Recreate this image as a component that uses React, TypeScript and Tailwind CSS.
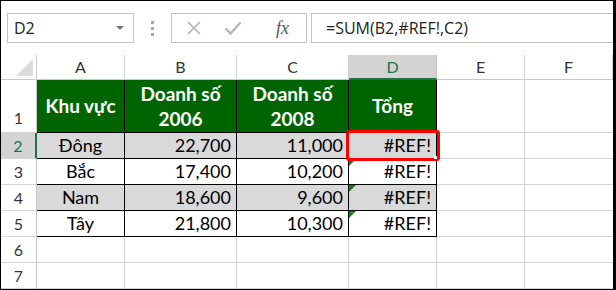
import React from 'react';

const cols = ['A', 'B', 'C', 'D', 'E', 'F'];

interface Row {
  area: string;
  y2006: string;
  y2008: string;
  shaded: boolean;
}

const rows: Row[] = [
  { area: 'Đông', y2006: '22,700', y2008: '11,000', shaded: true },
  { area: 'Bắc', y2006: '17,400', y2008: '10,200', shaded: false },
  { area: 'Nam', y2006: '18,600', y2008: '9,600', shaded: true },
  { area: 'Tây', y2006: '21,800', y2008: '10,300', shaded: false },
];

const cellFont = { fontFamily: 'Lato, "Open Sans", sans-serif' };
const uiFont = { fontFamily: '"Open Sans", "Noto Sans", sans-serif' };

function ErrorFlag() {
  return (
    <span className="absolute left-0 top-0 w-0 h-0 border-t-[7px] border-r-[7px] border-t-[#1e7b1e] border-r-transparent" />
  );
}

export default function App() {
  return (
    <div
      className="w-[616px] h-[290px] bg-white border-l border-t border-b border-r-[3px] border-black overflow-hidden flex flex-col"
      style={cellFont}
    >
      {/* formula bar */}
      <div className="flex items-stretch h-[30px] mt-[12px] pl-[6px]">
        <div className="w-[127px] border border-[#c6c6c6] flex items-center justify-between pl-[6px] pr-[9px]">
          <span className="text-[16px] text-[#222] leading-none" style={uiFont}>D2</span>
          <span className="w-0 h-0 border-l-[4px] border-r-[4px] border-t-[4px] border-l-transparent border-r-transparent border-t-[#777]" />
        </div>
        <div className="w-[37px] flex flex-col items-center justify-center gap-[3px]">
          <span className="w-[3px] h-[3px] bg-[#a8a8a8]" />
          <span className="w-[3px] h-[3px] bg-[#a8a8a8]" />
          <span className="w-[3px] h-[3px] bg-[#a8a8a8]" />
        </div>
        <div className="w-[136px] border border-[#c6c6c6] flex items-center pl-[14px] gap-[22px]">
          <svg width="16" height="16" viewBox="0 0 16 16">
            <path d="M2 2 L14 14 M14 2 L2 14" stroke="#b4b4b4" strokeWidth="1.6" fill="none" />
          </svg>
          <svg width="18" height="16" viewBox="0 0 18 16">
            <path d="M1.5 8.5 L6.5 13.5 L16.5 2.5" stroke="#b4b4b4" strokeWidth="2.4" fill="none" />
          </svg>
          <span
            className="text-[18px] italic text-[#555] leading-none ml-[12px]"
            style={{ fontFamily: '"Liberation Serif", serif' }}
          >
            fx
          </span>
        </div>
        <div className="flex-1 ml-[4px] border border-r-0 border-[#c6c6c6] flex items-center pl-[14px]">
          <span className="text-[16px] text-[#222] leading-none" style={uiFont}>=SUM(B2,#REF!,C2)</span>
        </div>
      </div>

      {/* sheet */}
      <div className="mt-[12px] grid grid-cols-[36px_88px_112px_112px_88px_88px_88px] grid-rows-[25px_53px_26px_26px_26px_26px_26px_26px]">
        {/* column headers */}
        <div className="relative border-r border-b border-[#c8c8c8]">
          <svg className="absolute right-[3px] bottom-[3px]" width="17" height="17" viewBox="0 0 17 17">
            <path d="M17 0 L17 17 L0 17 Z" fill="#dcdcdc" />
          </svg>
        </div>
        {cols.map((c) => (
          <div
            key={c}
            className={
              c === 'D'
                ? 'bg-[#d3d3d3] border-r border-[#c8c8c8] border-b-2 border-b-[#217346] flex items-center justify-center text-[16px] text-[#217346]'
                : 'border-r border-b border-[#d4d4d4] border-b-[#c8c8c8] flex items-center justify-center text-[16px] text-[#333]'
            }
          >
            {c}
          </div>
        ))}

        {/* row 1 */}
        <div className="border-r border-b border-[#c8c8c8] border-b-[#d4d4d4] flex items-end justify-center pb-[2px] text-[16px] text-[#333]">1</div>
        <div className="bg-[#006400] border-r border-b border-black flex items-center justify-center text-white font-bold text-[19px]">
          Khu vực
        </div>
        <div className="bg-[#006400] border-r border-b border-black flex items-center justify-center text-white font-bold text-[19px] leading-[25px] text-center">
          Doanh số<br />2006
        </div>
        <div className="bg-[#006400] border-r border-b border-black flex items-center justify-center text-white font-bold text-[19px] leading-[25px] text-center">
          Doanh số<br />2008
        </div>
        <div className="bg-[#006400] border-r border-b border-black flex items-center justify-center text-white font-bold text-[19px]">
          Tổng
        </div>
        <div className="border-r border-b border-[#d4d4d4]" />
        <div className="border-b border-[#d4d4d4]" />

        {/* data rows */}
        {rows.map((r, i) => {
          const active = i === 0;
          const bg = r.shaded ? 'bg-[#d9d9d9]' : 'bg-white';
          return (
            <React.Fragment key={r.area}>
              <div
                className={
                  active
                    ? 'bg-[#d3d3d3] border-r-2 border-r-[#217346] border-b border-b-[#d4d4d4] flex items-center justify-center text-[16px] text-[#217346]'
                    : 'border-r border-b border-[#c8c8c8] border-b-[#d4d4d4] flex items-center justify-center text-[16px] text-[#333]'
                }
              >
                {i + 2}
              </div>
              <div className={`${bg} border-r border-b border-black flex items-center justify-center text-[18px] text-black`}>
                {r.area}
              </div>
              <div className={`${bg} border-r border-b border-black flex items-center justify-end pr-[5px] text-[18px] text-black`}>
                {r.y2006}
              </div>
              <div className={`${bg} border-r border-b border-black flex items-center justify-end pr-[5px] text-[18px] text-black`}>
                {r.y2008}
              </div>
              <div className={`${bg} relative border-r border-b border-black flex items-center justify-end pr-[5px] text-[18px] text-black`}>
                {i > 0 && <ErrorFlag />}
                #REF!
                {active && (
                  <>
                    <span className="absolute -left-[3px] -top-[3px] -right-[4px] -bottom-[3px] border-[3.5px] border-[#ff0000] rounded-[3px] z-10" />
                    <span className="absolute right-[-1px] bottom-[-1px] w-[3px] h-[3px] bg-white z-20" />
                  </>
                )}
              </div>
              <div className="border-r border-b border-[#d4d4d4]" />
              <div className="border-b border-[#d4d4d4]" />
            </React.Fragment>
          );
        })}

        {/* rows 6 and 7 */}
        {[6, 7].map((n) => (
          <React.Fragment key={n}>
            <div className="border-r border-b border-[#c8c8c8] border-b-[#d4d4d4] flex items-center justify-center text-[16px] text-[#333]">
              {n}
            </div>
            <div className="border-r border-b border-[#d4d4d4]" />
            <div className="border-r border-b border-[#d4d4d4]" />
            <div className="border-r border-b border-[#d4d4d4]" />
            <div className="border-r border-b border-[#d4d4d4]" />
            <div className="border-r border-b border-[#d4d4d4]" />
            <div className="border-b border-[#d4d4d4]" />
          </React.Fragment>
        ))}
      </div>
    </div>
  );
}
